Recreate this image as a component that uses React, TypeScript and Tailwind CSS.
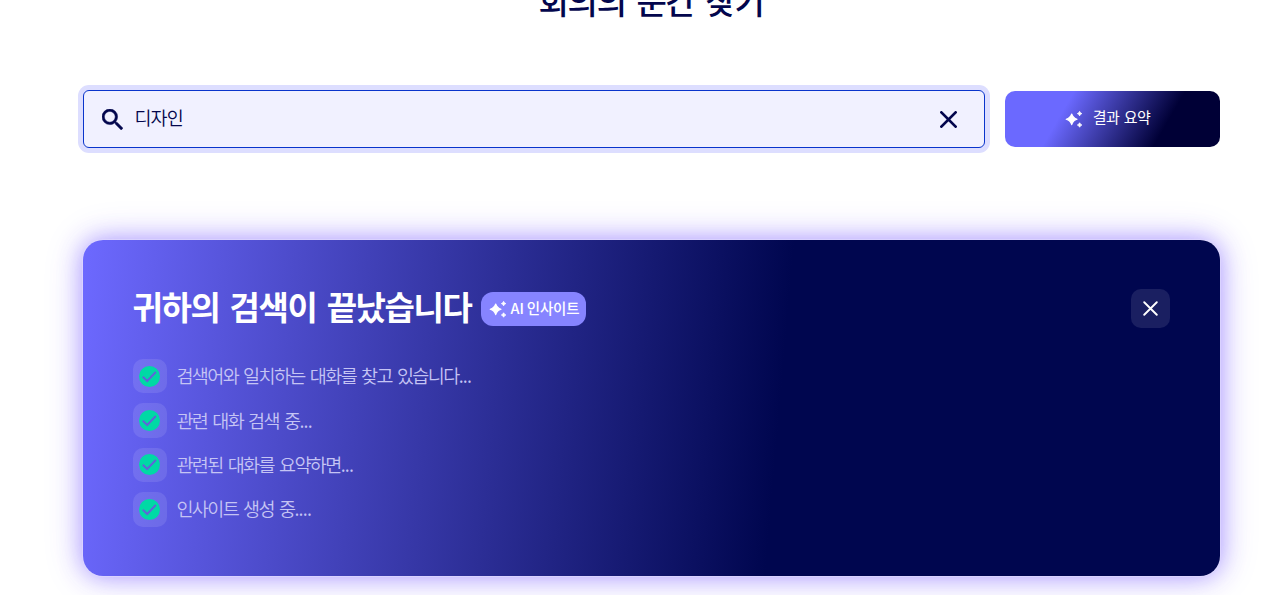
import React from "react";

const steps = [
  { id: 1, label: "검색어와 일치하는 대화를 찾고 있습니다", dots: "..." },
  { id: 2, label: "관련 대화 검색 중", dots: "..." },
  { id: 3, label: "관련된 대화를 요약하면", dots: "..." },
  { id: 4, label: "인사이트 생성 중", dots: "...." },
];

function Sparkles({ className }: { className?: string }) {
  return (
    <svg viewBox="0 0 18 18" fill="currentColor" className={className}>
      <path d="M6.7 4 Q8 8 12 9.3 Q8 10.6 6.7 14.6 Q5.4 10.6 1.2 9.3 Q5.4 8 6.7 4Z" stroke="currentColor" strokeWidth="1.2" strokeLinejoin="round" />
      <path d="M14.6 1.4 Q15.1 3.1 16.8 3.6 Q15.1 4.1 14.6 5.8 Q14.1 4.1 12.4 3.6 Q14.1 3.1 14.6 1.4Z" stroke="currentColor" strokeWidth=".9" strokeLinejoin="round" />
      <path d="M14.6 12.8 Q15.1 14.5 16.8 15 Q15.1 15.5 14.6 17.2 Q14.1 15.5 12.4 15 Q14.1 14.5 14.6 12.8Z" stroke="currentColor" strokeWidth=".9" strokeLinejoin="round" />
    </svg>
  );
}

function Cross({ className }: { className?: string }) {
  return (
    <svg viewBox="0 0 16 16" fill="none" stroke="currentColor" strokeLinecap="round" className={className}>
      <path d="M1.3 1.3 14.7 14.7M14.7 1.3 1.3 14.7" />
    </svg>
  );
}

export default function App() {
  return (
    <div className="h-[595px] overflow-hidden bg-white pl-[82.5px] pr-[60.5px] font-['Noto_Sans_CJK_KR',sans-serif] text-[#03064d]">
      <h1 className="-mt-[24px] h-12 text-center text-[33px] leading-[48px] font-medium tracking-[-1.2px] [word-spacing:4.3px]">회의의 순간 찾기</h1>

      {/* Search row */}
      <div className="mt-[66px] flex items-center justify-between">
        <div className="flex h-[58px] w-[902px] items-center rounded-md border border-[#0a35cc] bg-[#f1f1ff] pr-[27px] pl-[18px] ring-[5px] ring-[#dddeff]">
          <svg viewBox="3 3 17.5 17.5" fill="currentColor" className="size-[21px]">
            <path d="M15.5 14h-.79l-.28-.27A6.471 6.471 0 0 0 16 9.5 6.5 6.5 0 1 0 9.5 16c1.61 0 3.09-.59 4.23-1.57l.27.28v.79l5 4.99L20.49 19l-4.99-5zm-6 0C7.01 14 5 11.99 5 9.5S7.01 5 9.5 5 14 7.01 14 9.5 11.99 14 9.5 14z" stroke="currentColor" strokeWidth=".4" />
          </svg>
          <span className="mb-[5px] ml-3 flex-1 text-[18.5px] leading-6 font-[350] tracking-[-0.9px]">디자인</span>
          <Cross className="size-[17px] stroke-[2.6]" />
        </div>
        <button className="flex h-[56px] w-[215px] items-center justify-center rounded-[10px] bg-[linear-gradient(120deg,#6b69ff_28%,#000036_73%)] pr-[9px] text-white">
          <Sparkles className="size-[18px]" />
          <span className="mb-[3px] ml-[10px] text-[15px] font-normal tracking-[-0.6px] [word-spacing:1.8px]">결과 요약</span>
        </button>
      </div>

      {/* Insight panel */}
      <section className="mt-[92px] h-[336px] rounded-[20px] bg-[linear-gradient(95deg,#6d69ff_0%,#00064f_61%)] px-[50px] pt-[49px] shadow-[0_0_0_1px_rgba(225,218,255,0.6),0_0_24px_rgba(90,55,255,0.45),0_0_40px_rgba(90,55,255,0.2)]">
        <div className="flex h-[39px] items-center justify-between">
          <div className="flex h-[39px] items-center">
            <h2 className="mb-[5px] text-[33px] leading-10 font-bold tracking-[-1.4px] text-white [word-spacing:4.1px]">귀하의 검색이 끝났습니다</h2>
            <div className="ml-[10px] flex h-[34px] w-[105px] items-center justify-center rounded-xl bg-[#8684ff] text-white">
              <Sparkles className="size-[18px]" />
              <span className="mb-[2px] ml-1 text-[14.5px] font-medium tracking-[-0.2px]">AI 인사이트</span>
            </div>
          </div>
          <button className="flex size-[39px] items-center justify-center rounded-[10px] bg-white/10 text-white">
            <Cross className="size-[15px] stroke-[2]" />
          </button>
        </div>

        <ul className="mt-[31px] flex flex-col gap-[10px]">
          {steps.map((s) => (
            <li key={s.id} className="flex h-[34.4px] items-center">
              <span className="flex size-[34.4px] items-center justify-center rounded-[10px] bg-white/10">
                <svg viewBox="0 0 21 21" fill="none" className="size-[21px]">
                  <circle cx="10.5" cy="10.5" r="10.5" fill="#00d9a5" />
                  <path d="M3.8 10.8 8.2 15 16.8 6" stroke="#5f65d8" strokeWidth="2" />
                </svg>
              </span>
              <span className="mb-[2px] ml-[9.5px] text-[18.5px] leading-6 font-[350] tracking-[-1.6px] text-[#c5c4f4] [word-spacing:2.5px]">
                {s.label}<span className="tracking-[-0.8px]">{s.dots}</span>
              </span>
            </li>
          ))}
        </ul>
      </section>
    </div>
  );
}
